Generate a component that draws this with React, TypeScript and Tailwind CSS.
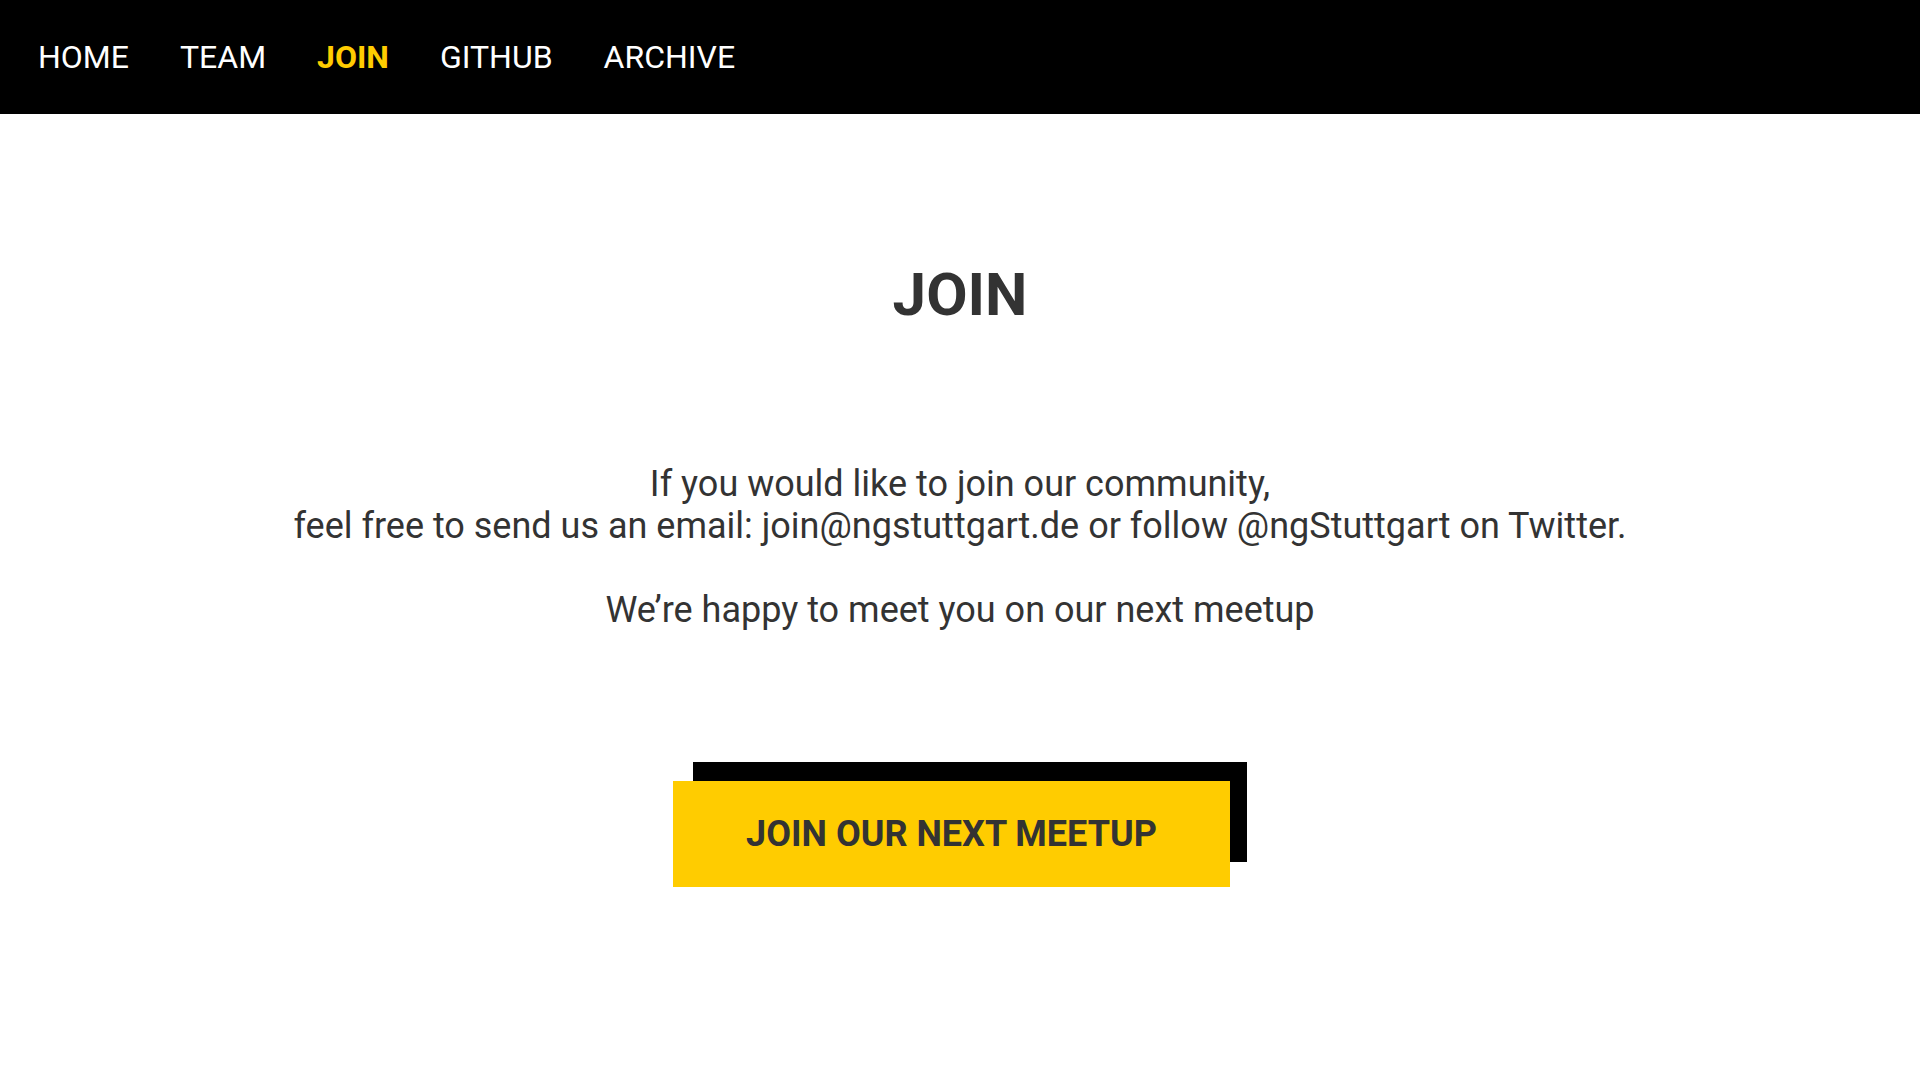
const links = ["HOME", "TEAM", "JOIN", "GITHUB", "ARCHIVE"];

const App = () => {
  return (
    <div className="min-h-screen bg-white font-['Roboto',sans-serif] text-[#333]">
      <nav className="h-[114px] bg-black flex items-center pl-[38px] gap-[51px]">
        {links.map((link) => (
          <a
            key={link}
            href="#"
            className={
              link === "JOIN"
                ? "text-[32px] leading-none font-bold text-[#ffcc00]"
                : "text-[32px] leading-none text-white"
            }
          >
            {link}
          </a>
        ))}
      </nav>

      <main className="flex flex-col items-center">
        <h1 className="mt-[145px] text-[60px] leading-[72px] font-bold">JOIN</h1>

        <p className="mt-[132px] text-center text-[36px] leading-[42px]">
          If you would like to join our community,
          <br />
          feel free to send us an email: join@ngstuttgart.de or follow
          @ngStuttgart on Twitter.
          <br />
          <br />
          We’re happy to meet you on our next meetup
        </p>

        <div className="relative mt-[131px] pt-[19px] pr-[17px]">
          <div className="absolute top-0 left-[20px] right-0 h-[100px] bg-black" />
          <button className="relative w-[557px] h-[106px] bg-[#ffcc00] text-[36px] leading-none font-bold text-[#333]">
            JOIN OUR NEXT MEETUP
          </button>
        </div>
      </main>
    </div>
  );
};

export default App;
